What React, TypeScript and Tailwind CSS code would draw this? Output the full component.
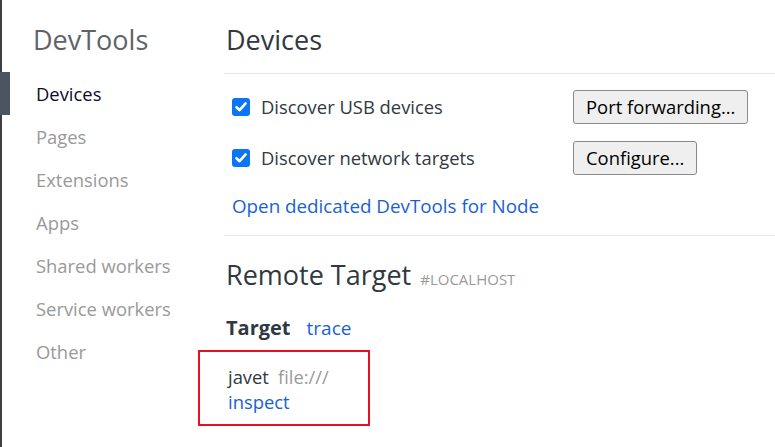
const navItems = [
  "Devices",
  "Pages",
  "Extensions",
  "Apps",
  "Shared workers",
  "Service workers",
  "Other",
];

function CheckBox() {
  return (
    <span className="flex h-[18px] w-[18px] shrink-0 items-center justify-center rounded-[3px] bg-[#0a75f5]">
      <svg width="14" height="14" viewBox="0 0 14 14" fill="none">
        <path
          d="M2.5 7.2 L5.6 10.2 L11.6 3.4"
          stroke="white"
          strokeWidth="2.6"
          strokeLinecap="round"
          strokeLinejoin="round"
        />
      </svg>
    </span>
  );
}

function OptionRow({ label, button }: { label: string; button: string }) {
  return (
    <div className="flex h-[34px] items-center">
      <div className="flex w-[349px] items-center gap-[11px] pl-[8px]">
        <CheckBox />
        <span className="text-[18.4px] text-[#303942]">{label}</span>
      </div>
      <button className="h-[34px] rounded-[3px] border border-[#8a8a8a] bg-[#efefef] px-[12px] text-[18.4px] text-black">
        {button}
      </button>
    </div>
  );
}

export default function App() {
  return (
    <div className="flex h-[447px] w-[775px] overflow-hidden bg-white font-['Open_Sans',sans-serif]">
      <aside className="relative w-[224px] shrink-0 border-l-2 border-[#3c3f44]">
        <h1 className="pl-[31px] pt-[22px] text-[27px] leading-[36px] text-[#5f6368]">
          DevTools
        </h1>
        <nav className="mt-[14px]">
          {navItems.map((item, i) => (
            <div
              key={item}
              className={`relative flex h-[43px] items-center pl-[34px] text-[18.4px] ${
                i === 0 ? "text-[#0b0b2b]" : "text-[#999999]"
              }`}
            >
              {i === 0 && (
                <span className="absolute -left-[2px] top-0 h-[43px] w-[10px] bg-[#4b5561]" />
              )}
              {item}
            </div>
          ))}
        </nav>
      </aside>

      <main className="flex-1">
        <h2 className="pl-[2px] pt-[22px] text-[27px] leading-[36px] text-[#303942]">Devices</h2>
        <div className="mt-[15px] border-t border-[#e8e8e8]" />

        <div className="mt-[16px] flex flex-col gap-[17px]">
          <OptionRow label="Discover USB devices" button="Port forwarding..." />
          <OptionRow label="Discover network targets" button="Configure..." />
        </div>

        <a className="mt-[19px] block pl-[8px] text-[18.8px] leading-[24px] text-[#1a5fd6]">
          Open dedicated DevTools for Node
        </a>

        <div className="mt-[17px] border-t border-[#e8e8e8]" />

        <div className="mt-[21px] flex items-baseline gap-[9px] pl-[2px] leading-[36px]">
          <span className="text-[27px] text-[#303942]">Remote Target</span>
          <span className="text-[15px] uppercase text-[#9a9a9a]">#localhost</span>
        </div>

        <div className="mt-[19px] flex items-baseline gap-[16px] pl-[2px] leading-[24px]">
          <span className="text-[20px] font-bold text-[#303942]">Target</span>
          <span className="text-[19px] text-[#1a5fd6]">trace</span>
        </div>

        <div className="-ml-[26px] mt-[10px] h-[76px] w-[172px] border-2 border-[#e81123] pl-[28px] pt-[12px]">
          <div className="flex items-baseline gap-[9px] leading-[25px]">
            <span className="text-[18.4px] text-[#303942]">javet</span>
            <span className="text-[18.4px] text-[#9a9a9a]">file:///</span>
          </div>
          <div className="text-[18.4px] leading-[25px] text-[#1a5fd6]">inspect</div>
        </div>
      </main>
    </div>
  );
}
